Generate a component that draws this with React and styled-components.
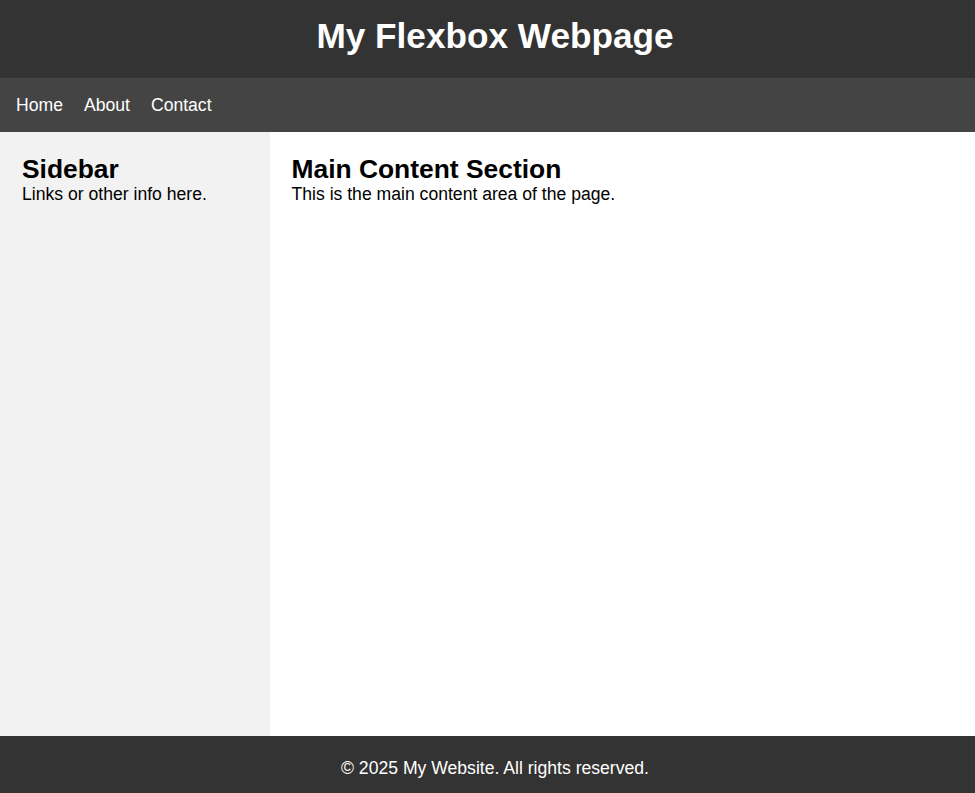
import React from "react";
import styled, { createGlobalStyle } from "styled-components";

const Global = createGlobalStyle`
  html, body { margin: 0; padding: 0; overflow: hidden; }
  body { font-family: "Liberation Sans", Arial, sans-serif; font-size: 17.6px; }
  * { box-sizing: border-box; }
`;

const Page = styled.div`
  width: 990px;
  min-height: 793px;
  display: flex;
  flex-direction: column;
`;

const Header = styled.header`
  background: #333;
  color: #fff;
  text-align: center;
  padding: 16px 0 21px;
  height: 78px;
`;

const Title = styled.h1`
  margin: 0;
  font-size: 35.2px;
  font-weight: bold;
  line-height: 40.5px;
`;

const Nav = styled.nav`
  background: #444;
  height: 54px;
  display: flex;
  align-items: center;
  gap: 21px;
  padding: 0 16px;
`;

const NavLink = styled.a`
  color: #fff;
  text-decoration: none;
  font-size: 17.6px;
`;

const Body = styled.div`
  flex: 1;
  display: flex;
`;

const Sidebar = styled.aside`
  width: 269.5px;
  flex-shrink: 0;
  background: #f2f2f2;
  padding: 22px 22px;
`;

const Main = styled.main`
  flex: 1;
  background: #fff;
  padding: 22px 22px;
`;

const Heading = styled.h2`
  margin: 0;
  font-size: 26.4px;
  line-height: 30.4px;
  font-weight: bold;
  color: #000;
`;

const Text = styled.p`
  margin: 0;
  font-size: 17.6px;
  line-height: 20.2px;
  color: #000;
`;

const Footer = styled.footer`
  background: #333;
  color: #fff;
  text-align: center;
  height: 57px;
  padding-top: 21.5px;
  font-size: 17.6px;
  line-height: 20.2px;
`;

export default function App() {
  return (
    <>
      <Global />
      <Page>
        <Header>
          <Title>My Flexbox Webpage</Title>
        </Header>
        <Nav>
          <NavLink href="#">Home</NavLink>
          <NavLink href="#">About</NavLink>
          <NavLink href="#">Contact</NavLink>
        </Nav>
        <Body>
          <Sidebar>
            <Heading>Sidebar</Heading>
            <Text>Links or other info here.</Text>
          </Sidebar>
          <Main>
            <Heading>Main Content Section</Heading>
            <Text>This is the main content area of the page.</Text>
          </Main>
        </Body>
        <Footer>© 2025 My Website. All rights reserved.</Footer>
      </Page>
    </>
  );
}
